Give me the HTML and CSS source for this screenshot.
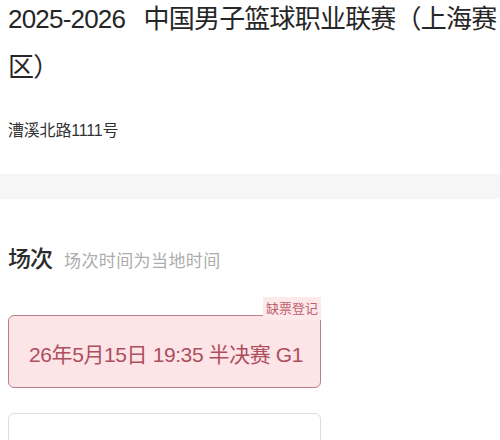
FILE: index.html
```html
<!DOCTYPE html>
<html lang="zh-CN">
<head>
<meta charset="utf-8">
<link rel="stylesheet" href="styles.css">
</head>
<body>
<header class="event">
  <h1 class="event-title">2025-2026 中国男子篮球职业联赛（上海赛区）</h1>
  <p class="event-address">漕溪北路1111号</p>
</header>
<div class="band"></div>
<section class="sessions">
  <div class="section-head">
    <span class="section-title">场次</span>
    <span class="section-note">场次时间为当地时间</span>
  </div>
  <div class="session-list">
    <div class="session selected">
      <span class="badge">缺票登记</span>
      <span class="session-text">26年5月15日 19:35 半决赛 G1</span>
    </div>
    <div class="session">
      <span class="session-text">26年5月17日 19:35 半决赛 G2</span>
    </div>
  </div>
</section>
</body>
</html>
```

FILE: styles.css
```css
html, body {
  margin: 0;
  padding: 0;
  background: #ffffff;
}
body {
  font-family: "Liberation Sans", "Noto Sans CJK SC", sans-serif;
  color: #333333;
  overflow: hidden;
}
.event {
  padding: 0 0 0 8px;
}
.event-title {
  margin: -5px 0 0 0;
  font-size: 26px;
  font-weight: 400;
  line-height: 48px;
  letter-spacing: -0.8px;
  word-spacing: 12px;
  color: #262626;
}
.event-address {
  margin: 28px 0 0 0;
  font-size: 16px;
  line-height: 24px;
  letter-spacing: -0.2px;
  color: #333333;
}
.band {
  height: 25px;
  margin-top: 31px;
  background: #f6f6f6;
}
.sessions {
  padding: 45px 8px 0 8px;
}
.section-head {
  display: flex;
  align-items: baseline;
  gap: 12px;
  line-height: 30px;
}
.section-title {
  font-size: 23px;
  font-weight: 500;
  letter-spacing: -1px;
  color: #2b2b2b;
}
.section-note {
  font-size: 17px;
  letter-spacing: 0.4px;
  color: #adadad;
}
.session-list {
  display: flex;
  flex-direction: column;
  align-items: flex-start;
  gap: 25px;
  margin-top: 38px;
}
.session {
  position: relative;
  padding: 23px 17px 17px 20px;
  border: 1px solid #dddddd;
  border-radius: 6px;
  background: #ffffff;
}
.session-text {
  display: block;
  font-size: 21px;
  line-height: 31px;
  letter-spacing: -0.4px;
  color: #333333;
  white-space: nowrap;
}
.session.selected {
  border-color: #b98088;
  background: #fde4e7;
}
.session.selected .session-text {
  color: #ad4f5e;
}
.badge {
  position: absolute;
  top: -19px;
  right: -1px;
  padding: 0 3px;
  font-size: 13px;
  line-height: 23px;
  letter-spacing: 0;
  color: #c0606e;
  background: #fde8ea;
}
```
